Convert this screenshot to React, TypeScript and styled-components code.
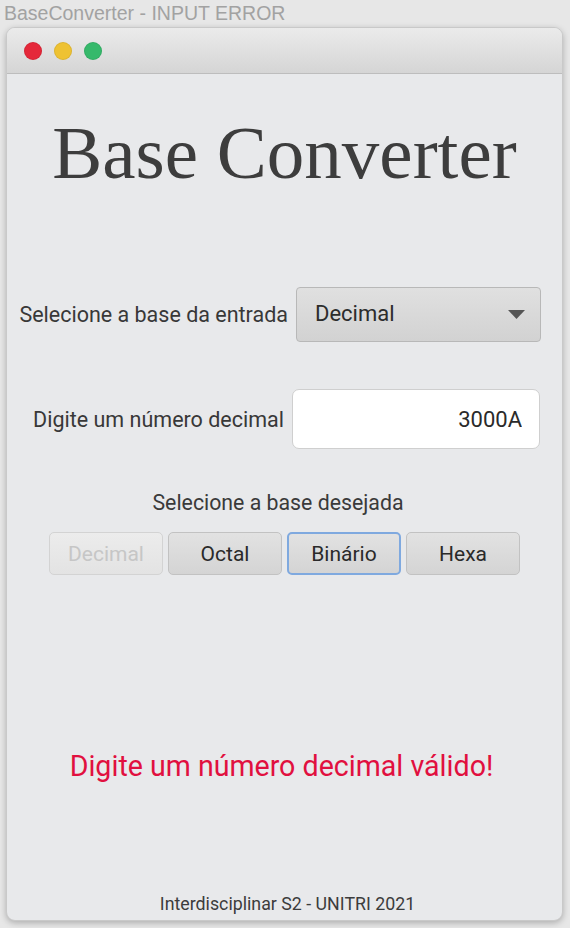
import { createGlobalStyle, styled } from "styled-components";

const GlobalStyle = createGlobalStyle`
  html, body {
    margin: 0;
    padding: 0;
    background: #e7e7e7;
  }
  body {
    width: 570px;
    height: 928px;
    overflow: hidden;
    font-family: Roboto, "Noto Sans", sans-serif;
  }
`;

const baseOptions = ["Decimal", "Octal", "Binário", "Hexa"];

export default function App() {
  const inputBase = "Decimal";
  const focused = "Binário";

  return (
    <>
      <GlobalStyle />
      <Page>
        <AppCaption>BaseConverter - INPUT ERROR</AppCaption>
        <Window>
          <TitleBar>
            <Light $color="#e5283a" />
            <Light $color="#eec233" />
            <Light $color="#36b96b" />
          </TitleBar>
          <Content>
            <Heading>Base Converter</Heading>

            <FormRow $top={97} $right={21}>
              <Label>Selecione a base da entrada</Label>
              <Select>
                <span>{inputBase}</span>
                <svg width="17" height="9" viewBox="0 0 17 9">
                  <path d="M0 0 L17 0 L8.5 9 Z" fill="#555" />
                </svg>
              </Select>
            </FormRow>

            <FormRow $top={47} $right={22}>
              <Label>Digite um número decimal</Label>
              <NumberInput defaultValue="3000A" />
            </FormRow>

            <SubLabel>Selecione a base desejada</SubLabel>
            <ButtonRow>
              {baseOptions.map((opt) => (
                <BaseButton
                  key={opt}
                  disabled={opt === inputBase}
                  $focused={opt === focused}
                >
                  {opt}
                </BaseButton>
              ))}
            </ButtonRow>

            <ErrorText>Digite um número decimal válido!</ErrorText>

            <Footer>Interdisciplinar S2 - UNITRI 2021</Footer>
          </Content>
        </Window>
      </Page>
    </>
  );
}

const Page = styled.div`
  display: flex;
  flex-direction: column;
  height: 928px;
`;

const AppCaption = styled.div`
  height: 27px;
  line-height: 26px;
  padding-left: 4px;
  font-family: "Liberation Sans", Arial, sans-serif;
  font-size: 19.5px;
  color: #a2a2a2;
`;

const Window = styled.div`
  margin-left: 6px;
  width: 557px;
  height: 894px;
  box-sizing: border-box;
  display: flex;
  flex-direction: column;
  background: #e8e9eb;
  border: 1px solid #c9c9c9;
  border-radius: 9px;
  box-shadow: 0 2px 6px rgba(0, 0, 0, 0.25);
  overflow: hidden;
`;

const TitleBar = styled.div`
  height: 46px;
  flex: none;
  display: flex;
  align-items: center;
  gap: 12px;
  padding-left: 17px;
  box-sizing: border-box;
  background: linear-gradient(#ebebeb, #d5d5d5);
  border-bottom: 1px solid #bdbdbd;
`;

const Light = styled.span<{ $color: string }>`
  width: 18px;
  height: 18px;
  border-radius: 50%;
  background: ${(p) => p.$color};
  box-shadow: inset 0 0 0 1px rgba(0, 0, 0, 0.08);
`;

const Content = styled.div`
  flex: 1;
  display: flex;
  flex-direction: column;
  align-items: center;
  padding-top: 41px;
  padding-bottom: 6px;
`;

const Heading = styled.h1`
  margin: 0;
  font-family: "Liberation Serif", "Times New Roman", serif;
  font-weight: normal;
  font-size: 75px;
  line-height: 75px;
  color: #3d3d3d;
`;

const FormRow = styled.div<{ $top: number; $right: number }>`
  margin-top: ${(p) => p.$top}px;
  align-self: stretch;
  display: flex;
  justify-content: flex-end;
  align-items: center;
  gap: 8px;
  padding-right: ${(p) => p.$right}px;
`;

const Label = styled.label`
  font-size: 21.5px;
  color: #383838;
`;

const Select = styled.div`
  width: 245px;
  height: 55px;
  box-sizing: border-box;
  display: flex;
  align-items: center;
  justify-content: space-between;
  padding: 0 15px 0 18px;
  border: 1px solid #b8b8b8;
  border-radius: 4px;
  background: linear-gradient(#e0e0e0, #d2d2d2);
  font-size: 22px;
  color: #2c2c2c;
  span {
    margin-top: -3px;
  }
`;

const NumberInput = styled.input`
  width: 248px;
  height: 60px;
  box-sizing: border-box;
  padding: 0 17px;
  border: 1px solid #cfcfcf;
  border-radius: 7px;
  background: #ffffff;
  font-family: Roboto, sans-serif;
  font-size: 22px;
  color: #2a2a2a;
  text-align: right;
  outline: none;
`;

const SubLabel = styled.div`
  margin-top: 42px;
  margin-right: 13px;
  font-size: 21.3px;
  line-height: 24px;
  color: #3a3a3a;
`;

const ButtonRow = styled.div`
  margin-top: 17px;
  display: flex;
  gap: 5px;
`;

const BaseButton = styled.button<{ $focused?: boolean }>`
  width: 114px;
  height: 43px;
  box-sizing: border-box;
  border-radius: 5px;
  font-family: Roboto, sans-serif;
  font-size: 21px;
  color: #2a2a2a;
  border: ${(p) => (p.$focused ? "2px solid #7fa9df" : "1px solid #c2c2c2")};
  background: linear-gradient(#e2e2e2, #d4d4d4);
  &:disabled {
    color: #c6c6c6;
    border-color: #d3d3d3;
    background: linear-gradient(#ececec, #e3e3e3);
  }
`;

const ErrorText = styled.div`
  margin-top: 175px;
  margin-right: 6px;
  font-size: 28.6px;
  line-height: 32px;
  color: #e1103f;
`;

const Footer = styled.div`
  margin-top: auto;
  margin-left: 6px;
  font-size: 17.8px;
  line-height: 20px;
  color: #3c3c3c;
`;
